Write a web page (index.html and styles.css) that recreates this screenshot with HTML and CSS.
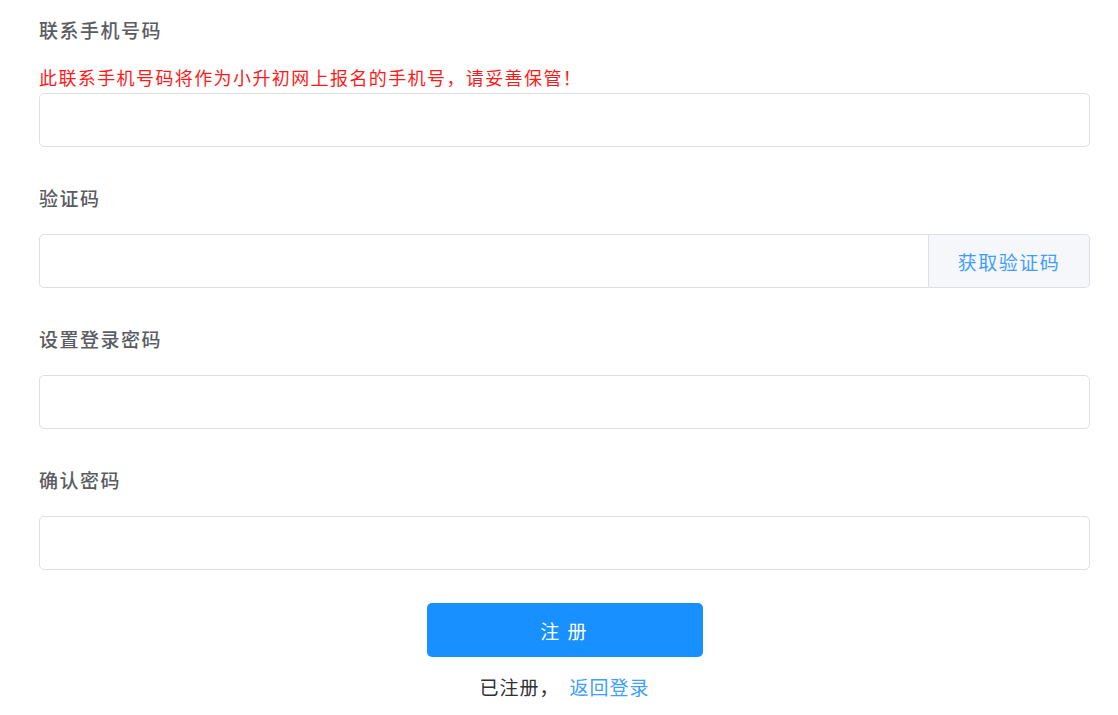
FILE: index.html
```html
<!DOCTYPE html>
<html lang="zh-CN">
<head>
<meta charset="utf-8">
<title>注册</title>
<link rel="stylesheet" href="styles.css">
</head>
<body>
<form class="register-form">
  <div class="field">
    <label class="field-label">联系手机号码</label>
    <div class="field-tip">此联系手机号码将作为小升初网上报名的手机号，请妥善保管！</div>
    <input class="text-input" type="text">
  </div>
  <div class="field">
    <label class="field-label">验证码</label>
    <div class="input-group">
      <input class="text-input group-input" type="text">
      <button type="button" class="append-btn">获取验证码</button>
    </div>
  </div>
  <div class="field">
    <label class="field-label">设置登录密码</label>
    <input class="text-input" type="password">
  </div>
  <div class="field field-last">
    <label class="field-label">确认密码</label>
    <input class="text-input" type="password">
  </div>
  <div class="actions">
    <button type="button" class="submit-btn">注 册</button>
    <div class="footer-line">已注册，<a class="login-link" href="#">返回登录</a></div>
  </div>
</form>
</body>
</html>
```

FILE: styles.css
```css
* { box-sizing: border-box; }
html, body {
  margin: 0;
  padding: 0;
  background: #ffffff;
}
body {
  font-family: "Noto Sans CJK SC", "Noto Sans", sans-serif;
  color: #606266;
}
.register-form {
  width: 1051px;
  margin-left: 39px;
  padding-top: 14px;
}
.field {
  display: flex;
  flex-direction: column;
  margin-bottom: 35px;
}
.field-last { margin-bottom: 33px; }
.field-label {
  font-size: 19px;
  line-height: 32px;
  height: 32px;
  letter-spacing: 1.5px;
  color: #5a5c61;
  font-weight: 500;
  margin-bottom: 20px;
}
.field-tip {
  font-size: 18px;
  line-height: 22px;
  letter-spacing: 1.4px;
  color: #ff1a1a;
  margin-bottom: 5px;
}
.text-input {
  display: block;
  width: 100%;
  height: 54px;
  border: 1px solid #dcdfe6;
  border-radius: 5px;
  background: #fff;
  outline: none;
  padding: 0 15px;
  font-size: 18px;
}
.input-group {
  display: flex;
  height: 54px;
}
.group-input {
  flex: 1;
  border-radius: 5px 0 0 5px;
}
.append-btn {
  width: 161px;
  height: 54px;
  border: 1px solid #dcdfe6;
  border-left: none;
  border-radius: 0 5px 5px 0;
  background: #f5f7fa;
  color: #409eff;
  font-family: inherit;
  font-size: 19px;
  letter-spacing: 1.5px;
  padding: 0;
  cursor: pointer;
}
.actions {
  display: flex;
  flex-direction: column;
  align-items: center;
}
.submit-btn {
  width: 276px;
  height: 54px;
  border: none;
  border-radius: 5px;
  background: #1890ff;
  color: #fff;
  font-family: inherit;
  font-size: 19px;
  letter-spacing: 2px;
  cursor: pointer;
}
.footer-line {
  margin-top: 18px;
  font-size: 19px;
  line-height: 24px;
  color: #303133;
  letter-spacing: 1px;
}
.login-link {
  color: #409eff;
  text-decoration: none;
  margin-left: 10px;
}
```
